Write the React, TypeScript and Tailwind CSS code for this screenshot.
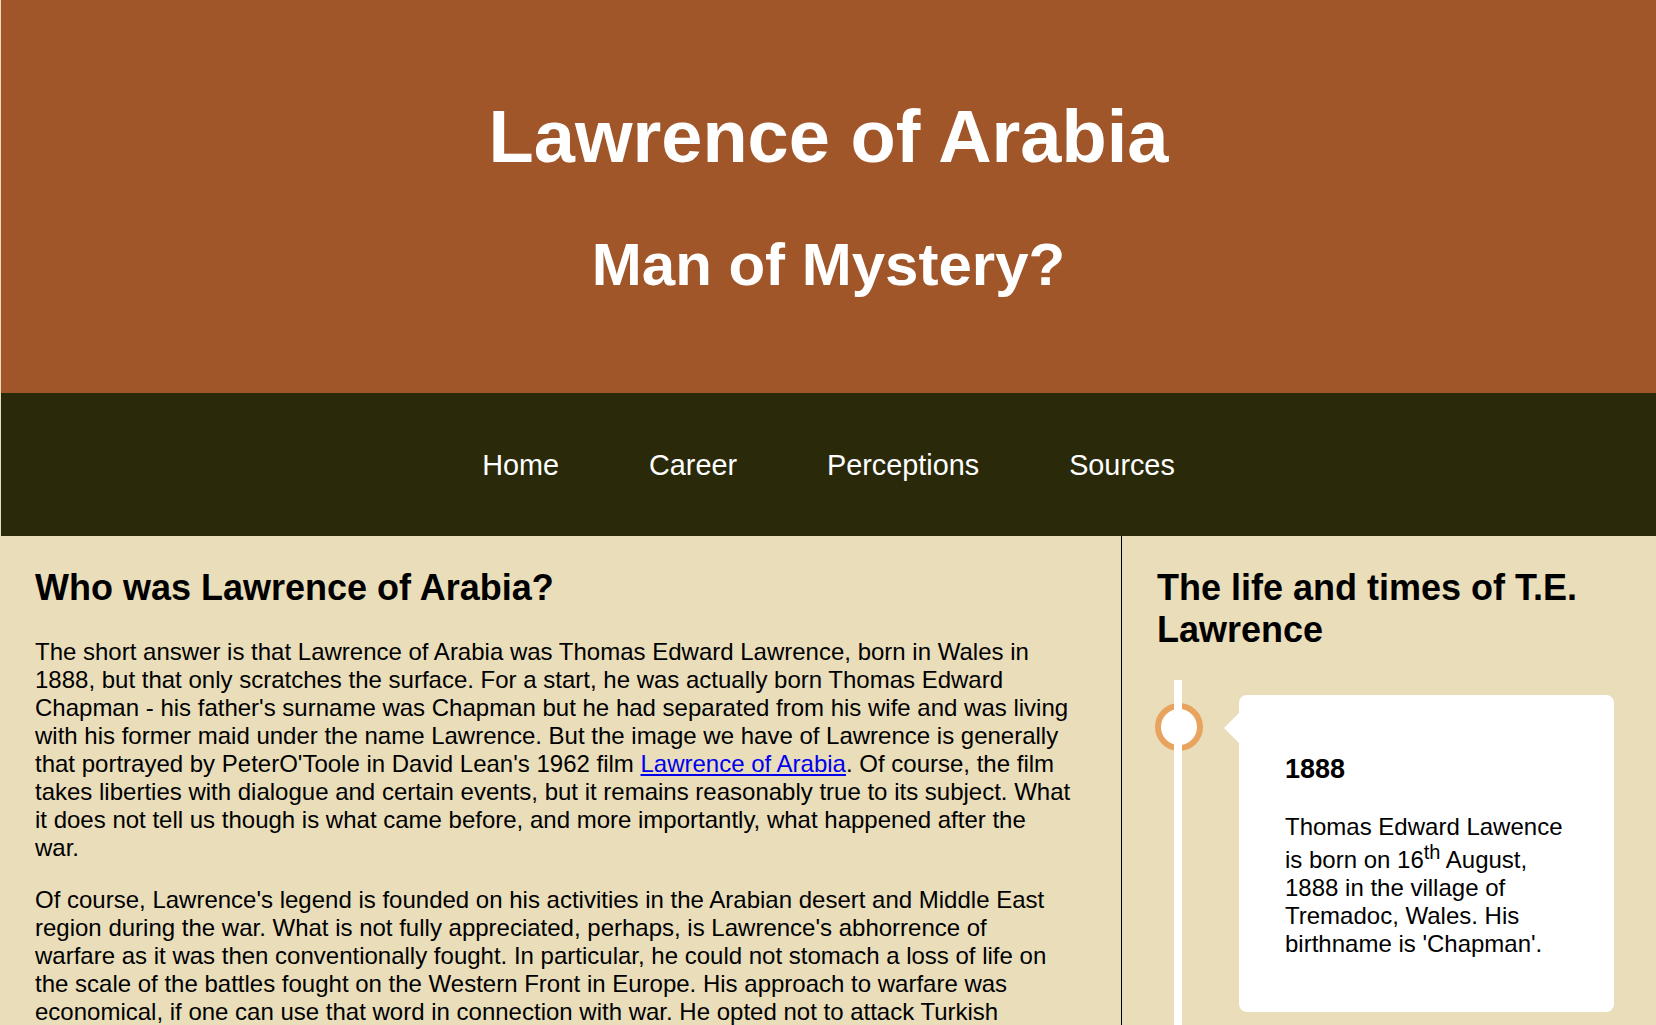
const navItems = ['Home', 'Career', 'Perceptions', 'Sources']

function Timeline() {
  return (
    <div className="relative mt-[29px] pt-[15px] pb-[80px]">
      {/* ring sits under the white line */}
      <div className="absolute left-[-2px] top-[23px] w-[48px] h-[48px] rounded-full border-[6px] border-[#e8a45e] bg-white" />
      <div className="absolute left-[17px] top-0 bottom-0 w-[8px] bg-white" />

      <div className="relative ml-[82px] w-[375px] rounded-lg bg-white px-[46px] pt-[59px] pb-[54px]">
        <span className="absolute left-[-15px] top-[18px] w-0 h-0 border-y-[15px] border-y-transparent border-r-[15px] border-r-white" />
        <h3 className="text-[27px] leading-[31px] font-bold mb-[28px]">1888</h3>
        <p className="text-[24px] leading-[normal]">
          Thomas Edward Lawence is born on 16
          <sup className="static align-super text-[20px] leading-[normal]">th</sup> August, 1888 in the village
          of Tremadoc, Wales. His birthname is 'Chapman'.
        </p>
      </div>
    </div>
  )
}

export default function App() {
  return (
    <div className="min-h-screen bg-[#e9ddba] pl-[1px] text-black font-['Liberation_Sans',Arial,sans-serif]">
      {/* Banner */}
      <header className="h-[393px] bg-[#a1562a] text-white text-center pt-[94px]">
        <h1 className="text-[74px] leading-[85px] font-bold">Lawrence of Arabia</h1>
        <h2 className="mt-[51px] text-[60px] leading-[69px] font-bold">Man of Mystery?</h2>
      </header>

      {/* Navigation */}
      <nav className="h-[143px] bg-[#2a2a0a] flex items-center justify-center pt-[3px]">
        <ul className="flex gap-[90px] text-[28.8px] text-white">
          {navItems.map((item) => (
            <li key={item}>
              <a href="#">{item}</a>
            </li>
          ))}
        </ul>
      </nav>

      <main className="flex">
        <section className="w-[1121px] shrink-0 border-r border-black pl-[34px] pr-[50px] pt-[31px] pb-[40px]">
          <h2 className="text-[36px] leading-[42px] font-bold mb-[29px]">Who was Lawrence of Arabia?</h2>
          <p className="text-[24px] leading-[normal] mb-[24px]">
            The short answer is that Lawrence of Arabia was Thomas Edward Lawrence, born in Wales in 1888, but that
            only scratches the surface. For a start, he was actually born Thomas Edward Chapman - his father's surname
            was Chapman but he had separated from his wife and was living with his former maid under the name
            Lawrence. But the image we have of Lawrence is generally that portrayed by PeterO'Toole in David Lean's
            1962 film{' '}
            <a href="#" className="text-[#0000ee] underline">
              Lawrence of Arabia
            </a>
            . Of course, the film takes liberties with dialogue and certain events, but it remains reasonably true to
            its subject. What it does not tell us though is what came before, and more importantly, what happened
            after the war.
          </p>
          <p className="text-[24px] leading-[normal] mb-[24px]">
            Of course, Lawrence's legend is founded on his activities in the Arabian desert and Middle East region
            during the war. What is not fully appreciated, perhaps, is Lawrence's abhorrence of warfare as it was then
            conventionally fought. In particular, he could not stomach a loss of life on the scale of the battles
            fought on the Western Front in Europe. His approach to warfare was economical, if one can use that word in
            connection with war. He opted not to attack Turkish garrisons head on, preferring instead to raid the
            Hejaz railway and tie down far larger forces with a handful of men.
          </p>
        </section>

        <aside className="flex-1 pl-[35px] pr-[35px] pt-[31px]">
          <h2 className="text-[36px] leading-[42px] font-bold">The life and times of T.E. Lawrence</h2>
          <Timeline />
        </aside>
      </main>
    </div>
  )
}
